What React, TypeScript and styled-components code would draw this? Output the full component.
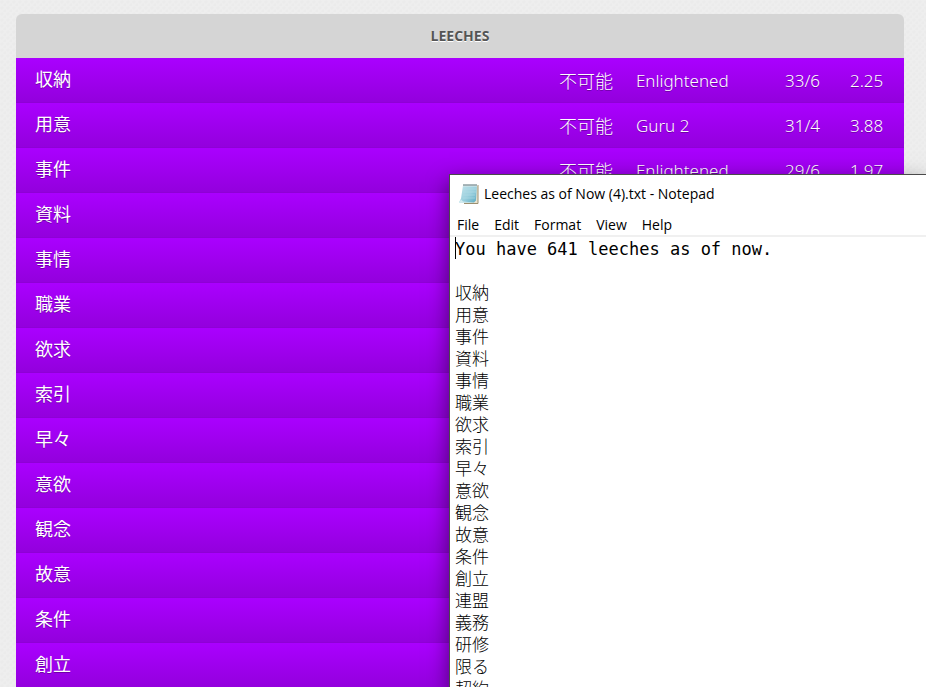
import { FunctionComponent } from "react";
import styled, { createGlobalStyle } from "styled-components";

type Leech = {
  word: string;
  reading?: string;
  stage?: string;
  ratio?: string;
  score?: string;
};

const leeches: Leech[] = [
  { word: "収納", reading: "不可能", stage: "Enlightened", ratio: "33/6", score: "2.25" },
  { word: "用意", reading: "不可能", stage: "Guru 2", ratio: "31/4", score: "3.88" },
  { word: "事件", reading: "不可能", stage: "Enlightened", ratio: "29/6", score: "1.97" },
  { word: "資料" },
  { word: "事情" },
  { word: "職業" },
  { word: "欲求" },
  { word: "索引" },
  { word: "早々" },
  { word: "意欲" },
  { word: "観念" },
  { word: "故意" },
  { word: "条件" },
  { word: "創立" },
];

const noteWords = [
  ...leeches.map((leech) => leech.word),
  "連盟",
  "義務",
  "研修",
  "限る",
  "契約",
];

const noteText = ["You have 641 leeches as of now.", "", ...noteWords].join("\n");

const menuItems = ["File", "Edit", "Format", "View", "Help"];

const GlobalStyle = createGlobalStyle`
  * {
    box-sizing: border-box;
  }
  body {
    margin: 0;
    overflow: hidden;
  }
`;

const Page = styled.main`
  position: relative;
  height: 100vh;
  overflow: hidden;
  padding: 14px 22px 0 16px;
  background-color: #eeeeee;
  background-image:
    radial-gradient(circle at 2px 2px, #ebebeb 1px, transparent 2px),
    radial-gradient(circle at 5px 5px, #ebebeb 1px, transparent 2px);
  background-size: 6px 6px;
`;

const LeechTable = styled.table`
  width: 100%;
  table-layout: fixed;
  border-collapse: separate;
  border-spacing: 0;
  border-radius: 6px 6px 0 0;
  overflow: hidden;
  color: #ffffff;
  font-family: "Noto Sans", "Noto Sans CJK JP", sans-serif;
`;

const Heading = styled.th`
  height: 44px;
  padding: 0;
  background: #d5d5d5;
  color: #555555;
  font-family: "Open Sans", sans-serif;
  font-size: 14px;
  font-weight: 700;
  line-height: 20px;
  text-shadow: 0 1px 0 #ffffff;
`;

const Column = styled.col<{ $width?: number }>`
  width: ${({ $width }) => ($width ? `${$width}px` : "auto")};
`;

const Cell = styled.td`
  height: 45px;
  padding: 2px 0 0;
  background: linear-gradient(#aa00ff, #9300dd);
  border-bottom: 1px solid #8f00d6;
  font-size: 17px;
  font-weight: 300;
  line-height: 24px;
  white-space: nowrap;
  text-shadow: 0 1px 0 rgba(0, 0, 0, 0.3);
`;

const WordCell = styled(Cell)`
  padding: 0 0 2px 19px;
  font-size: 18px;
  font-weight: 400;
`;

const ReadingCell = styled(Cell)`
  font-size: 18px;
`;

const WordLink = styled.a`
  color: inherit;
  text-decoration: none;
`;

const NotepadWindow = styled.section`
  position: absolute;
  top: 174px;
  right: 0;
  bottom: 0;
  left: 449px;
  display: flex;
  flex-direction: column;
  border: 1px solid #4a4a4a;
  border-width: 1px 0 0 1px;
  background: #ffffff;
  box-shadow: 0 8px 20px rgba(0, 0, 0, 0.5);
  color: #000000;
  font-family: "Open Sans", sans-serif;
`;

const TitleBar = styled.header`
  display: flex;
  align-items: center;
  gap: 4px;
  height: 38px;
  padding-left: 9px;
`;

const Title = styled.h1`
  margin: 0;
  font-size: 14px;
  font-weight: 400;
  line-height: 20px;
  white-space: nowrap;
`;

const MenuBar = styled.nav`
  display: flex;
  gap: 15px;
  height: 24px;
  padding-left: 7px;
  border-bottom: 2px solid #f0f0f0;
`;

const MenuButton = styled.button`
  padding: 2px 0 0;
  border: 0;
  background: none;
  color: inherit;
  font-family: inherit;
  font-size: 14px;
  line-height: 20px;
`;

const Editor = styled.div`
  position: relative;
  display: flex;
  flex: 1;
  min-height: 0;
`;

const Caret = styled.span`
  position: absolute;
  top: 0;
  left: 5px;
  width: 1px;
  height: 22px;
  background: #000000;
`;

const NoteArea = styled.textarea`
  flex: 1;
  min-width: 0;
  margin: 0;
  padding: 1px 0 0 5px;
  border: 0;
  outline: 0;
  resize: none;
  overflow: hidden;
  background: transparent;
  color: inherit;
  font-family: "DejaVu Sans Mono", "Noto Sans CJK JP", monospace;
  font-size: 17px;
  font-weight: 300;
  line-height: 22px;
`;

const NotepadIcon: FunctionComponent = () => (
  <svg width="21" height="22" viewBox="0 0 21 22" aria-hidden="true">
    <defs>
      <linearGradient id="sheet" x1="0" y1="0" x2="1" y2="1">
        <stop offset="0" stopColor="#c3e4ec" />
        <stop offset="0.55" stopColor="#9bd0de" />
        <stop offset="1" stopColor="#5aa9c1" />
      </linearGradient>
    </defs>
    <path d="M5 3h14v17H5z" fill="#e9e3cf" />
    <path d="M19 2v18.500H5" fill="none" stroke="#9c8f70" strokeWidth="1" />
    <path d="M4 2.500h14l-1 15-2 2H0l2-4z" fill="url(#sheet)" />
    <path d="M0 19.500l2-3 2 2 11 1z" fill="#d3ecf0" />
    <path
      d="M4 6h13M4 9h13M4 12h12M4 15h12"
      stroke="#b3dde7"
      strokeWidth="1"
      opacity="0.6"
    />
    <path d="M4 2.500h14" stroke="#d9e6e8" strokeWidth="2" />
    <path
      d="M5 1v2M7 1v2M9 1v2M11 1v2M13 1v2M15 1v2M17 1v2"
      stroke="#687b80"
      strokeWidth="1"
    />
  </svg>
);

const LeechRow: FunctionComponent<{ leech: Leech }> = ({ leech }) => (
  <tr>
    <WordCell>
      <WordLink href={`#${leech.word}`}>{leech.word}</WordLink>
    </WordCell>
    <ReadingCell>{leech.reading}</ReadingCell>
    <Cell>{leech.stage}</Cell>
    <Cell>{leech.ratio}</Cell>
    <Cell>{leech.score}</Cell>
  </tr>
);

const Notepad: FunctionComponent = () => (
  <NotepadWindow>
    <TitleBar>
      <NotepadIcon />
      <Title>Leeches as of Now (4).txt - Notepad</Title>
    </TitleBar>
    <MenuBar>
      {menuItems.map((item) => (
        <MenuButton key={item} type="button">
          {item}
        </MenuButton>
      ))}
    </MenuBar>
    <Editor>
      <NoteArea
        aria-label="Text editor"
        lang="ja"
        spellCheck={false}
        defaultValue={noteText}
      />
      <Caret />
    </Editor>
  </NotepadWindow>
);

const App: FunctionComponent = () => (
  <Page>
    <GlobalStyle />
    <LeechTable lang="ja">
      <colgroup>
        <Column />
        <Column $width={77} />
        <Column $width={149} />
        <Column $width={65} />
        <Column $width={54} />
      </colgroup>
      <thead>
        <tr>
          <Heading colSpan={5}>LEECHES</Heading>
        </tr>
      </thead>
      <tbody>
        {leeches.map((leech) => (
          <LeechRow key={leech.word} leech={leech} />
        ))}
      </tbody>
    </LeechTable>
    <Notepad />
  </Page>
);

export default App;
